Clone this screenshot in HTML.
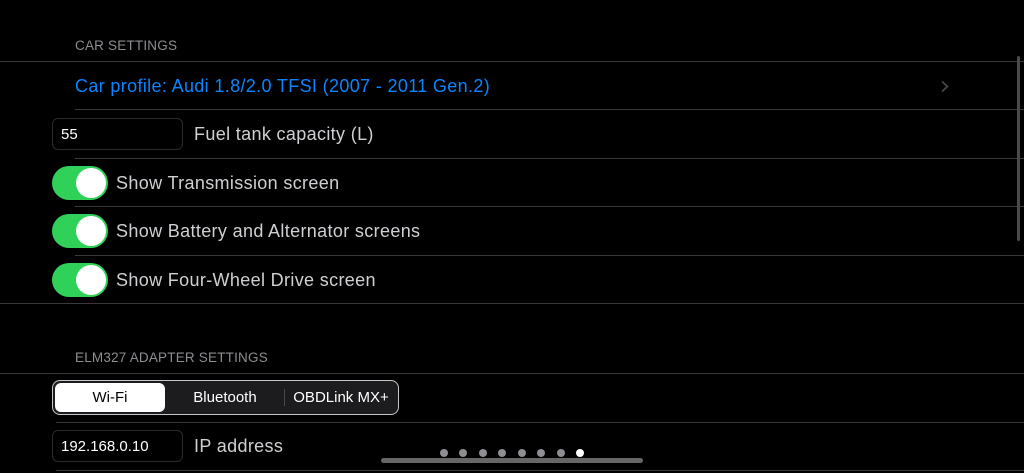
<!DOCTYPE html>
<html><head><style>
body{margin:0;width:1024px;height:473px;background:#000;overflow:hidden;position:relative;font-family:"Liberation Sans",sans-serif;}
.a{position:absolute;}
.hd{color:#8d8d92;font-size:13.5px;left:75px;letter-spacing:0.2px;}
.ln{height:1px;background:#3a3a3c;right:0;}
.t{color:#d0d0d4;font-size:18px;letter-spacing:0.35px;}
.tf{left:52px;width:131px;height:32px;border:1px solid #2a2a2c;border-radius:6px;color:#fff;font-size:15px;line-height:32px;box-sizing:border-box;padding-left:8px;}
.tg{left:52px;width:56px;height:34px;border-radius:17px;background:#30d158;}
.tg:after{content:"";position:absolute;right:2px;top:2px;width:30px;height:30px;border-radius:15px;background:#fff;}
.d{width:8px;height:8px;border-radius:4px;background:#8e8e93;top:449px;}
.sg{font-size:15px;text-align:center;line-height:29px;height:29px;top:383px;}
</style></head><body>
<div class="a hd" style="top:38px">CAR SETTINGS</div>
<div class="a ln" style="top:61px;left:0"></div>
<div class="a" style="left:75px;top:76px;color:#0a84ff;font-size:18px;letter-spacing:0.35px">Car profile: Audi 1.8/2.0 TFSI (2007 - 2011 Gen.2)</div>
<svg class="a" style="left:940px;top:79px" width="10" height="15"><path d="M2 2.5 L7.5 7.5 L2 12.5" stroke="#4a4a4e" stroke-width="1.6" fill="none"/></svg>
<div class="a ln" style="top:109px;left:75px"></div>
<div class="a tf" style="top:118px">55</div>
<div class="a t" style="left:194px;top:124px">Fuel tank capacity (L)</div>
<div class="a ln" style="top:158px;left:75px"></div>
<div class="a tg" style="top:166px"></div>
<div class="a t" style="left:116px;top:173px">Show Transmission screen</div>
<div class="a ln" style="top:206px;left:75px"></div>
<div class="a tg" style="top:214px"></div>
<div class="a t" style="left:116px;top:221px">Show Battery and Alternator screens</div>
<div class="a ln" style="top:255px;left:75px"></div>
<div class="a tg" style="top:263px"></div>
<div class="a t" style="left:116px;top:270px">Show Four-Wheel Drive screen</div>
<div class="a ln" style="top:303px;left:0"></div>
<div class="a" style="left:1017px;top:56px;width:3px;height:185px;border-radius:2px;background:#4a4a4c"></div>
<div class="a hd" style="top:350px">ELM327 ADAPTER SETTINGS</div>
<div class="a ln" style="top:373px;left:0"></div>
<div class="a" style="left:52px;top:380px;width:347px;height:35px;box-sizing:border-box;border:1.5px solid #c8c8cc;border-radius:8px;background:#1c1c1e"></div>
<div class="a sg" style="left:55px;width:110px;border-radius:6px;background:#fff;color:#000">Wi-Fi</div>
<div class="a sg" style="left:165px;width:120px;color:#fff">Bluetooth</div>
<div class="a" style="left:284px;top:389px;width:1px;height:17px;background:#48484a"></div>
<div class="a sg" style="left:285px;width:112px;color:#fff">OBDLink MX+</div>
<div class="a ln" style="top:422px;left:56px"></div>
<div class="a tf" style="top:430px">192.168.0.10</div>
<div class="a t" style="left:194px;top:436px">IP address</div>
<div class="a ln" style="top:470px;left:56px"></div>
<div class="a d" style="left:440px"></div><div class="a d" style="left:459px"></div><div class="a d" style="left:479px"></div><div class="a d" style="left:498px"></div><div class="a d" style="left:518px"></div><div class="a d" style="left:537px"></div><div class="a d" style="left:557px"></div><div class="a d" style="left:576px;background:#fff"></div>
<div class="a" style="left:381px;top:458px;width:262px;height:5px;border-radius:3px;background:#666"></div>
</body></html>
